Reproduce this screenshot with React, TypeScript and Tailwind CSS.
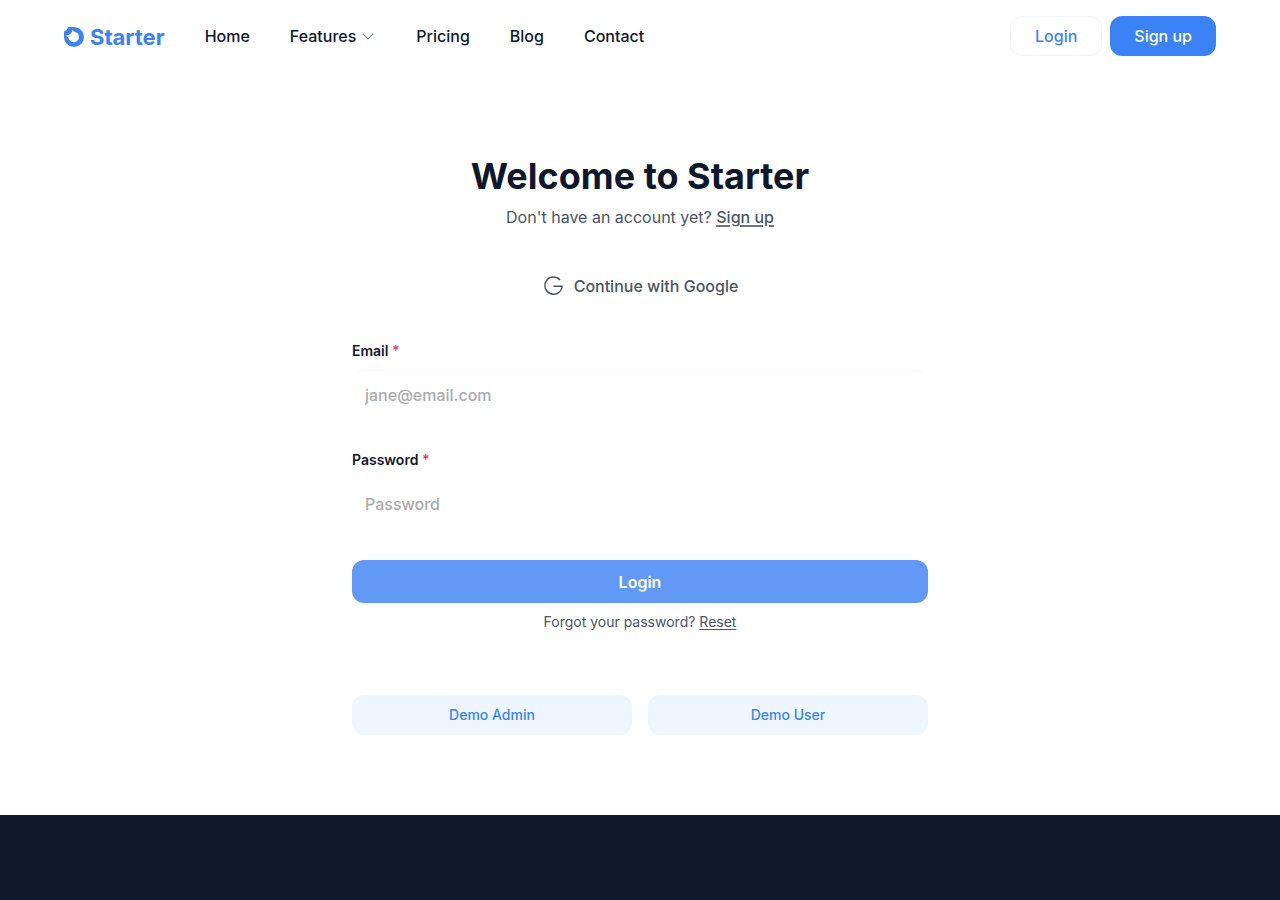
import React from 'react';
import { PiCaretDownLight } from 'react-icons/pi';

const navItems = [
  { name: 'Home', href: '#home' },
  { name: 'Features', href: '#features', hasMenu: true },
  { name: 'Pricing', href: '#pricing' },
  { name: 'Blog', href: '#blog' },
  { name: 'Contact', href: '#contact' },
];

const fields = [
  { id: 'email', label: 'Email', type: 'email', placeholder: 'jane@email.com', border: 'border-t-gray-100/60' },
  { id: 'password', label: 'Password', type: 'password', placeholder: 'Password', border: 'border-t-transparent' },
];

const demoAccounts = ['Demo Admin', 'Demo User'];

const Logo = () => (
  <a href="#home" className="flex items-center gap-1.5 pt-0.5 text-[#3b82f6]">
    <svg viewBox="0 0 20 20" className="w-5 h-5" fill="currentColor" aria-hidden="true">
      <path
        fillRule="evenodd"
        d="M0 4.4 Q3.4 3.4 4.4 0 H10 A10 10 0 1 1 0 10 Z M8.6 2.4 Q8 7.6 1.8 8.8 Q4.2 9.6 4.6 11.4 A5.3 5.3 0 1 0 11.2 4.9 Q9.2 4.4 8.6 2.4 Z"
      />
    </svg>
    <span className="text-[22px] leading-7 font-bold">Starter</span>
  </a>
);

const GoogleIcon = () => (
  <svg viewBox="0 0 24 24" className="w-6 h-6" fill="none" stroke="currentColor" strokeWidth="1.4" aria-hidden="true">
    <path d="M18.1 6.1 A8.6 8.6 0 1 0 20.1 12.2 H11.4" />
  </svg>
);

const Header = () => (
  <header className="flex items-center justify-between px-16 py-4">
    <div className="flex items-center gap-10">
      <Logo />
      <nav className="flex items-center gap-10">
        {navItems.map((item) => (
          <a key={item.name} href={item.href} className="flex items-center gap-1 font-medium text-[#0f172a]">
            {item.name}
            {item.hasMenu && <PiCaretDownLight className="w-4 h-4 text-slate-600" />}
          </a>
        ))}
      </nav>
    </div>
    <div className="flex items-center gap-2">
      <button
        type="button"
        className="h-10 px-6 rounded-xl border border-slate-100 font-medium text-[#3b82f6]"
      >
        Login
      </button>
      <button type="button" className="h-10 px-6 rounded-xl font-medium text-white bg-[#3b82f6]">
        Sign up
      </button>
    </div>
  </header>
);

const App = () => {
  return (
    <div className="min-h-screen flex flex-col bg-white text-base font-['Inter',sans-serif]">
      <Header />

      <main className="w-full max-w-xl mx-auto pt-20 pb-20">
        <div className="text-center">
          <h1 className="text-4xl leading-12 font-bold text-[#0f172a]">Welcome to Starter</h1>
          <p className="mt-1 leading-[26px] text-[#4b5563]">
            Don't have an account yet?{' '}
            <a href="#signup" className="font-medium underline underline-offset-2 decoration-2 decoration-[#6b7280]">
              Sign up
            </a>
          </p>
        </div>

        <button
          type="button"
          className="mt-9 w-full h-10 flex items-center justify-center gap-2 font-medium text-[#4b5563]"
        >
          <GoogleIcon />
          Continue with Google
        </button>

        <form className="mt-[35px]" onSubmit={(e) => e.preventDefault()}>
          <div className="flex flex-col gap-[30px]">
            {fields.map((field) => (
              <div key={field.id}>
                <label htmlFor={field.id} className="block text-sm font-semibold text-[#0f172a]">
                  {field.label} <span className="text-[#ef4444]">*</span>
                </label>
                <input
                  id={field.id}
                  type={field.type}
                  placeholder={field.placeholder}
                  className={`block mt-[9px] w-full h-[50px] px-3 rounded-xl border border-transparent font-medium placeholder:text-[#a9abae] ${field.border}`}
                />
              </div>
            ))}
          </div>

          <button
            type="submit"
            className="mt-[31px] w-full h-[43px] rounded-xl font-semibold text-white bg-[#6299f7]"
          >
            Login
          </button>
        </form>

        <p className="mt-[9px] text-sm text-center text-[#4b5563]">
          Forgot your password?{' '}
          <a href="#reset" className="underline underline-offset-2">
            Reset
          </a>
        </p>

        <div className="mt-[63px] grid grid-cols-2 gap-4">
          {demoAccounts.map((account) => (
            <button
              key={account}
              type="button"
              className="h-10 rounded-xl text-sm font-medium text-[#3b82f6] bg-[#eef6ff]"
            >
              {account}
            </button>
          ))}
        </div>
      </main>

      <footer className="grow bg-[#0f172a]" />
    </div>
  );
};

export default App;
